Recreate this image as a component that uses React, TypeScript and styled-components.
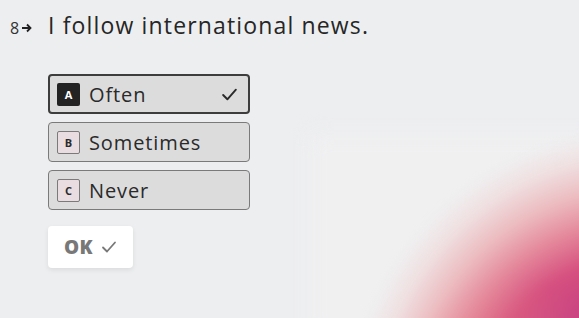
import { createGlobalStyle, styled } from 'styled-components'

const Global = createGlobalStyle`
  html, body {
    margin: 0;
    padding: 0;
    background: #edeef0;
  }
  body {
    font-family: 'Open Sans', 'Liberation Sans', sans-serif;
    color: #262626;
  }
`

const Page = styled.div`
  position: relative;
  width: 579px;
  height: 318px;
  overflow: hidden;
  background: #edeef0;
`
const Panel = styled.div`
  position: absolute;
  left: 310px;
  top: 135px;
  right: -20px;
  bottom: -20px;
  background: #f0f0f1;
  filter: blur(10px);
`
const Blob = styled.div`
  position: absolute;
  left: 350px;
  top: 130px;
  width: 580px;
  height: 580px;
  border-radius: 50%;
  background:
    radial-gradient(
      circle at 28% 48%,
      rgba(238, 160, 135, 0.4) 0%,
      rgba(238, 160, 135, 0) 25%
    ),
    radial-gradient(
      circle closest-side,
      #c13a86 0%,
      #c63e82 40%,
      #d6507f 56%,
      #e4869a 68%,
      #ecbcc0 80%,
      #efdfe0 91%,
      rgba(240, 240, 241, 0) 100%
    );
  filter: blur(4px);
`
const Content = styled.div`
  position: relative;
  padding: 9px 0 0 10px;
`
const Question = styled.div`
  display: flex;
  align-items: baseline;
`
const Number = styled.span`
  display: flex;
  align-items: center;
  width: 38px;
  font-size: 16px;
  color: #333;
`
const Title = styled.h1`
  margin: 0;
  font-size: 23px;
  font-weight: 400;
  letter-spacing: 1.15px;
  color: #262626;
`
const Options = styled.div`
  display: flex;
  flex-direction: column;
  gap: 8px;
  margin: 33px 0 0 38px;
  width: 202px;
`
const Option = styled.div<{ selected?: boolean }>`
  box-sizing: border-box;
  height: 40px;
  display: flex;
  align-items: center;
  padding: 0 ${p => (p.selected ? '10px' : '11px')} 0
    ${p => (p.selected ? '7px' : '8px')};
  border-radius: 4px;
  background: #dcdcdd;
  border: ${p => (p.selected ? '2px solid #3d3d3d' : '1px solid #7a7a7a')};
`
const Key = styled.span<{ selected?: boolean }>`
  box-sizing: border-box;
  width: 23px;
  height: 23px;
  display: flex;
  align-items: center;
  justify-content: center;
  border-radius: 2px;
  font-size: 11px;
  font-weight: 700;
  background: ${p => (p.selected ? '#232323' : '#e9dde1')};
  color: ${p => (p.selected ? '#fff' : '#2a2a2a')};
  border: ${p => (p.selected ? 'none' : '1px solid #7a7a7a')};
`
const Label = styled.span`
  flex: 1;
  margin-left: 9px;
  font-size: 20px;
  letter-spacing: 0.9px;
  color: #2a2a2a;
`
const OkButton = styled.button`
  margin: 16px 0 0 38px;
  width: 85px;
  height: 42px;
  display: flex;
  align-items: center;
  justify-content: center;
  gap: 8px;
  border: none;
  border-radius: 4px;
  background: #fff;
  box-shadow: 0 2px 5px rgba(0, 0, 0, 0.08);
  font-family: inherit;
  font-size: 19px;
  font-weight: 800;
  letter-spacing: 0.5px;
  color: #787878;
`

const Check = ({ color, w }: { color: string; w: number }) => (
  <svg width={w} height={w} viewBox="0 0 16 16" fill="none">
    <path
      d="M2 8.5 L6 12.5 L14 3.5"
      stroke={color}
      strokeWidth="1.8"
      strokeLinecap="round"
      strokeLinejoin="round"
    />
  </svg>
)

const options = [
  { key: 'A', label: 'Often', selected: true },
  { key: 'B', label: 'Sometimes' },
  { key: 'C', label: 'Never' },
]

function App() {
  return (
    <Page>
      <Global />
      <Panel />
      <Blob />
      <Content>
        <Question>
          <Number>
            8
            <svg width="12" height="12" viewBox="0 0 12 12" style={{ marginLeft: 2 }}>
              <path d="M1 6 H9 M6 2.5 L9.5 6 L6 9.5" stroke="#222" strokeWidth="1.8" fill="none" />
            </svg>
          </Number>
          <Title>I follow international news.</Title>
        </Question>
        <Options>
          {options.map(o => (
            <Option key={o.key} selected={o.selected}>
              <Key selected={o.selected}>{o.key}</Key>
              <Label>{o.label}</Label>
              {o.selected && <Check color="#2a2a2a" w={17} />}
            </Option>
          ))}
        </Options>
        <OkButton>
          OK
          <Check color="#787878" w={16} />
        </OkButton>
      </Content>
    </Page>
  )
}

export default App
